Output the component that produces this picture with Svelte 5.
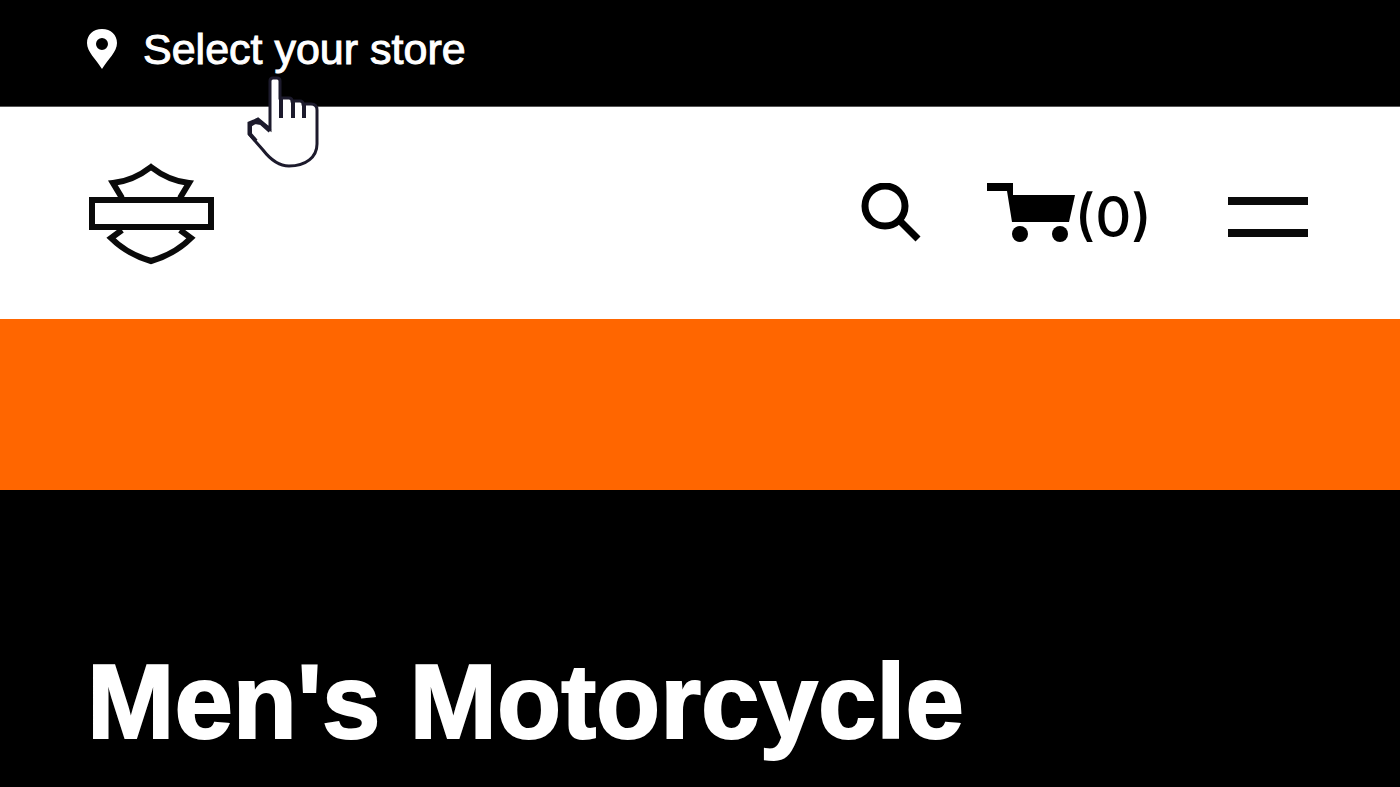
<script>
  export let store = "Select your store";
  export let title = "Men's Motorcycle";
  export let cartCount = 0;
</script>

<div class="page">
  <div class="store-bar">
    <a class="store" href="#store">
      <svg class="pin" viewBox="0 0 30 40" aria-hidden="true">
        <path
          fill-rule="evenodd"
          d="M15 0C6 0 0 6 0 14c0 9 9 16 15 26 6-10 15-17 15-26C30 6 24 0 15 0zm0 9a6 6 0 1 1 0 12 6 6 0 0 1 0-12z"
        />
      </svg>
      <span>{store}</span>
    </a>
    <svg class="pointer" viewBox="0 0 74 92" aria-hidden="true">
      <path
        d="M24 52V5q0-3 3-3h4q3 0 3 3v17h9q3 0 3 3h8q3 0 3 3h8q6 0 6 6v34c0 13-11 22-28 22-11 0-19-7-26-16L3 58V47l5-2 4-2 12 10z"
      />
      <path class="folds" d="M35 22v20M47 24v18M58 27v15" />
      <path class="thumb" d="M24 55l-9-8-6-1-5 3v9l6 7M12 45v-2" />
    </svg>
  </div>

  <header>
    <a class="logo" href="#home" aria-label="Home">
      <svg viewBox="0 0 126 104" aria-hidden="true">
        <path d="M34 37l-9-15q20-2 38-16 18 14 38 16l-9 15" />
        <path d="M34 69l-11 8q16 16 40 23 24-7 40-23l-11-8" />
        <rect x="4" y="39" width="119" height="27" />
      </svg>
    </a>

    <nav>
      <button class="search" type="button" aria-label="Search">
        <svg viewBox="0 0 60 60" aria-hidden="true">
          <circle cx="24" cy="23" r="20" />
          <path d="M38 37l19 19" />
        </svg>
      </button>
      <button class="cart" type="button" aria-label={`Cart, ${cartCount} items`}>
        <svg viewBox="0 0 88 60" aria-hidden="true">
          <path d="M0 0h26v12h62l-6 27H25L20 8H0z" />
          <circle cx="33" cy="51" r="8" />
          <circle cx="73" cy="51" r="8" />
        </svg>
        <span>({cartCount})</span>
      </button>
      <button class="menu" type="button" aria-label="Menu">
        <span></span>
        <span></span>
      </button>
    </nav>
  </header>

  <div class="banner"></div>

  <main>
    <h1>{title}</h1>
  </main>
</div>

<style>
  :global(body) {
    background: #000;
  }

  .page {
    font-family: "Liberation Sans", Arial, sans-serif;
    color: #fff;
    overflow-x: hidden;
  }

  .store-bar {
    position: relative;
    display: flex;
    align-items: center;
    height: 107px;
    padding: 0 87px;
    box-sizing: border-box;
    border-bottom: 1px solid #555;
    background: #000;
  }

  .store {
    display: flex;
    align-items: center;
    gap: 26px;
    padding-bottom: 8px;
    color: #fff;
    font-size: 43px;
    line-height: 46px;
    -webkit-text-stroke: 1px #fff;
    text-decoration: none;
    white-space: nowrap;
  }

  .pin {
    width: 30px;
    height: 40px;
    fill: #fff;
  }

  /* hovers over the store link and the header */
  .pointer {
    position: absolute;
    left: 246px;
    top: 76px;
    width: 74px;
    height: 92px;
    z-index: 2;
    fill: #fff;
    stroke: #1c1a2c;
    stroke-width: 3;
  }

  .pointer .folds,
  .pointer .thumb {
    fill: none;
    stroke-width: 4;
  }

  header {
    display: flex;
    align-items: center;
    justify-content: space-between;
    height: 212px;
    padding: 0 92px 0 88px;
    background: #fff;
  }

  .logo svg {
    display: block;
    width: 126px;
    height: 104px;
    fill: none;
    stroke: #0a0a0a;
    stroke-width: 6;
  }

  nav {
    display: flex;
    align-items: center;
  }

  button {
    display: flex;
    padding: 0;
    border: 0;
    background: none;
    color: #000;
    cursor: pointer;
  }

  .search svg {
    width: 60px;
    height: 60px;
    fill: none;
    stroke: #000;
    stroke-width: 7;
  }

  .cart {
    align-items: center;
    margin: 0 76px 0 66px;
    font: 500 56px/60px Inter, sans-serif;
  }

  .cart svg {
    width: 88px;
    height: 60px;
  }

  .cart span {
    padding-top: 8px;
  }

  .menu {
    flex-direction: column;
    gap: 24px;
    padding-top: 8px;
  }

  .menu span {
    width: 80px;
    height: 8px;
    background: #0a0a0a;
  }

  .banner {
    height: 171px;
    background: #ff6600;
  }

  main {
    padding: 144px 87px 0;
    background: #000;
  }

  h1 {
    margin: 0;
    font-weight: 700;
    font-size: 105px;
    line-height: 136px;
    -webkit-text-stroke: 2px #fff;
    white-space: nowrap;
  }
</style>
